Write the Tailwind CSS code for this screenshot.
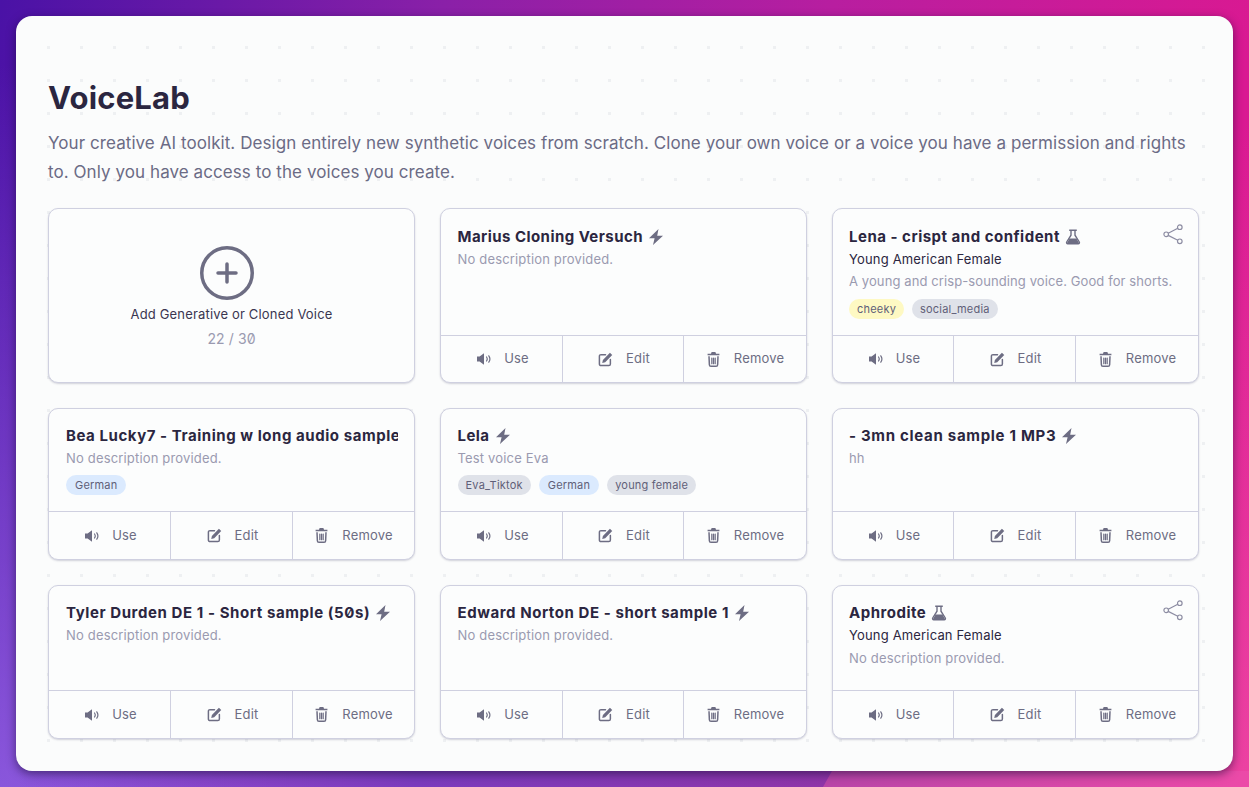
<!DOCTYPE html>
<html lang="en">

<head>
    <meta charset="UTF-8">
    <meta name="viewport" content="width=device-width, initial-scale=1.0">
    <title>VoiceLab</title>
    <script src="https://cdn.jsdelivr.net/npm/@tailwindcss/browser@4"></script>
</head>

<body class="font-['Inter',sans-serif] slashed-zero">
    <svg class="hidden">
        <symbol id="speaker" viewBox="1 1 14 14">
            <path fill="currentColor" d="M1 5.500h2.600L8 2.200v11.600L3.600 10.500H1z" />
            <path fill="none" stroke="currentColor" stroke-width="1.200" stroke-linecap="round" d="M10.500 6c.9 1.200.9 2.800 0 4M12.800 4.800c1.400 2 1.400 4.400 0 6.400" />
        </symbol>
        <symbol id="edit" viewBox="0 0 16 16">
            <path fill="none" stroke="currentColor" stroke-width="1.600" stroke-linecap="round" stroke-linejoin="round" d="M8 2.800H3.200A1.700 1.700 0 0 0 1.500 4.500v8.300a1.700 1.700 0 0 0 1.700 1.700h8.300a1.700 1.700 0 0 0 1.700-1.700V8" />
            <path fill="currentColor" d="M12.700.8l2.500 2.500-7.500 7.600-3.200.7.700-3.200z" />
        </symbol>
        <symbol id="trash" viewBox="0 0 16 16">
            <path fill="currentColor" d="M6 0h4l.7 1.800h3.600v1.600H1.700V1.800h3.600z" />
            <path fill="none" stroke="currentColor" stroke-width="1.600" stroke-linejoin="round" d="M3.200 4.500l.4 9a1.700 1.700 0 0 0 1.700 1.700h5.400a1.700 1.700 0 0 0 1.700-1.700l.4-9" />
            <path fill="none" stroke="currentColor" stroke-width="1.300" stroke-linecap="round" d="M6.200 6.500v6M8 6.500v6M9.800 6.500v6" />
        </symbol>
        <symbol id="bolt" viewBox="0 0 16 16">
            <path fill="currentColor" d="M10.500 0 1 9.300h5.600L5 16 15 6.700H9.200z" />
        </symbol>
        <symbol id="flask" viewBox="0 0 16 16">
            <path fill="none" stroke="currentColor" stroke-width="1.400" d="M4.200 1.200h7.600M6 1.200v5L1.700 13a1.200 1.200 0 0 0 1 1.800h10.600a1.200 1.200 0 0 0 1-1.800L10 6.200v-5" />
            <path fill="currentColor" d="M4.500 9.500h7l2.600 4.800H1.900z" />
        </symbol>
        <symbol id="share" viewBox="0 0 20 20">
            <g fill="none" stroke="currentColor" stroke-width="1.200">
                <circle cx="16.800" cy="3.200" r="2.300" />
                <circle cx="3.200" cy="10.300" r="2.300" />
                <circle cx="16.800" cy="17.300" r="2.300" />
                <path d="M14.800 4.300 5.200 9.200M5.200 11.400l9.600 4.800" />
            </g>
        </symbol>
    </svg>

    <div class="w-[1249px] h-[787px] overflow-hidden relative bg-[linear-gradient(97deg,#4a12a6_0%,#8a20a8_33%,#b81ea0_62%,#e0188f_100%)]">
        <div class="absolute inset-0 bg-[radial-gradient(ellipse_at_0%_100%,rgba(170,130,255,0.6),transparent_65%),radial-gradient(ellipse_at_100%_100%,rgba(255,130,190,0.4),transparent_60%)]"></div>
        <div class="absolute left-0 bottom-0 w-[832px] h-4 bg-[linear-gradient(90deg,transparent_2%,#7a3bbd_50%,#8f35a8)]"></div>
        <div class="absolute right-0 bottom-0 w-[426px] h-4 [clip-path:polygon(9px_0,100%_0,100%_100%,0_100%)] bg-[linear-gradient(90deg,#b845a8,#d848a8_60%,#ec4aa8)]"></div>

        <main class="absolute left-4 top-4 w-[1217px] h-[755px] rounded-2xl bg-[#fbfcfc] shadow-[0_3px_10px_rgba(20,10,50,0.55)] overflow-hidden">
            <div class="absolute left-[16px] top-[15px] w-[1204px] h-[726px] bg-[radial-gradient(circle,#eef0f2_1.800px,transparent_2px)] bg-[length:33px_33px]"></div>

            <div class="relative pl-8 pr-[34px] pt-[62px]">
                <h1 class="text-[31px] leading-10 font-bold text-[#2b2640] tracking-[0.2px]">VoiceLab</h1>
                <p class="mt-[11px] text-[17px] leading-[29px] tracking-[0.07px] text-[#6b6b85]">Your creative AI toolkit. Design entirely new synthetic voices from scratch. Clone your own voice or a voice you have a permission and rights to. Only you have access to the voices you create.</p>

                <div class="mt-[21px] grid grid-cols-[367px_367px_367px] grid-rows-[175px_152px_154px] gap-[25px] tracking-[0.17px]">
                    <button class="rounded-[10px] border border-[#cfd0e0] bg-[#fcfdfd] shadow-[0_1px_2px_rgba(40,40,80,0.2)] flex flex-col items-center pt-[37px]">
                        <svg class="w-[54px] h-[54px] mr-[10px] text-[#6d6d83]" viewBox="0 0 54 54" fill="none" stroke="currentColor">
                            <circle cx="27" cy="27" r="25.250" stroke-width="3.500" />
                            <path d="M18 27h18M27 18v18" stroke-width="3.500" stroke-linecap="round" />
                        </svg>
                        <span class="mt-[4px] text-[13px] leading-5 text-[#3a3650]">Add Generative or Cloned Voice</span>
                        <span class="mt-[5px] text-[14px] leading-5 tracking-[0.1px] text-[#9a9ab0]">22 / 30</span>
                    </button>

                    <div class="rounded-[10px] border border-[#cfd0e0] bg-[#fcfdfd] shadow-[0_1px_2px_rgba(40,40,80,0.2)] flex flex-col overflow-hidden">
                        <div class="flex-1 px-[16.500px] pt-[18px] min-h-0">
                            <h2 class="flex items-center gap-[5px] text-[15px] leading-5 font-bold tracking-[0.45px] text-[#2b2640] whitespace-nowrap">Marius Cloning Versuch <svg class="w-4 h-4 text-[#6d6d83]"><use href="#bolt" /></svg></h2>
                            <p class="mt-[2px] text-[13px] leading-5 text-[#9a9ab0]">No description provided.</p>
                        </div>
                        <div class="h-[47px] shrink-0 border-t border-[#cfd0e0] grid grid-cols-[122px_121px_1fr] text-[13px] text-[#6d6d83]">
                            <div class="pl-[3px] flex items-center justify-center gap-[13px] border-r border-[#cfd0e0]"><svg class="w-[14px] h-[14px]"><use href="#speaker" /></svg>Use</div>
                            <div class="pl-[2px] flex items-center justify-center gap-[13px] border-r border-[#cfd0e0]"><svg class="w-[15px] h-[15px]"><use href="#edit" /></svg>Edit</div>
                            <div class="flex items-center justify-center gap-[13px]"><svg class="w-[15px] h-[15px]"><use href="#trash" /></svg>Remove</div>
                        </div>
                    </div>

                    <div class="relative rounded-[10px] border border-[#cfd0e0] bg-[#fcfdfd] shadow-[0_1px_2px_rgba(40,40,80,0.2)] flex flex-col overflow-hidden">
                        <svg class="absolute right-[15px] top-[14px] w-[20px] h-[22px] text-[#8d8da3]"><use href="#share" /></svg>
                        <div class="flex-1 px-4 pt-[18px] min-h-0">
                            <h2 class="flex items-center gap-[5px] text-[15px] leading-5 font-bold tracking-[0.5px] text-[#2b2640] whitespace-nowrap">Lena - crispt and confident <svg class="w-4 h-4 text-[#6d6d83]"><use href="#flask" /></svg></h2>
                            <p class="mt-[2px] text-[13px] leading-5 text-[#2b2640]">Young American Female</p>
                            <p class="mt-[2px] text-[13px] leading-5 tracking-[0.1px] text-[#9a9ab0]">A young and crisp-sounding voice. Good for shorts.</p>
                            <div class="mt-[8px] flex gap-2 text-[11px] leading-5 tracking-[0.2px] text-[#5f5f78]">
                                <span class="rounded-full px-2 bg-[#fef9c3]">cheeky</span>
                                <span class="rounded-full px-2 bg-[#dfe2e9]">social_media</span>
                            </div>
                        </div>
                        <div class="h-[47px] shrink-0 border-t border-[#cfd0e0] grid grid-cols-[121px_122px_1fr] text-[13px] text-[#6d6d83]">
                            <div class="pl-[3px] flex items-center justify-center gap-[13px] border-r border-[#cfd0e0]"><svg class="w-[14px] h-[14px]"><use href="#speaker" /></svg>Use</div>
                            <div class="pl-[2px] flex items-center justify-center gap-[13px] border-r border-[#cfd0e0]"><svg class="w-[15px] h-[15px]"><use href="#edit" /></svg>Edit</div>
                            <div class="flex items-center justify-center gap-[13px]"><svg class="w-[15px] h-[15px]"><use href="#trash" /></svg>Remove</div>
                        </div>
                    </div>

                    <div class="rounded-[10px] border border-[#cfd0e0] bg-[#fcfdfd] shadow-[0_1px_2px_rgba(40,40,80,0.2)] flex flex-col overflow-hidden">
                        <div class="flex-1 px-[16.500px] pl-[17px] pt-[17px] min-h-0 overflow-hidden">
                            <h2 class="text-[15px] leading-5 font-bold tracking-[0.55px] text-[#2b2640] whitespace-nowrap overflow-hidden">Bea Lucky7 - Training w long audio sample</h2>
                            <p class="mt-[2px] text-[13px] leading-5 text-[#9a9ab0]">No description provided.</p>
                            <div class="mt-[7px] flex gap-2 text-[11px] leading-5 tracking-[0.2px] text-[#5f5f78]">
                                <span class="rounded-full px-[9px] bg-[#dbeafe]">German</span>
                            </div>
                        </div>
                        <div class="h-[48px] shrink-0 border-t border-[#cfd0e0] grid grid-cols-[122px_122px_1fr] text-[13px] text-[#6d6d83]">
                            <div class="pl-[3px] flex items-center justify-center gap-[13px] border-r border-[#cfd0e0]"><svg class="w-[14px] h-[14px]"><use href="#speaker" /></svg>Use</div>
                            <div class="pl-[2px] flex items-center justify-center gap-[13px] border-r border-[#cfd0e0]"><svg class="w-[15px] h-[15px]"><use href="#edit" /></svg>Edit</div>
                            <div class="flex items-center justify-center gap-[13px]"><svg class="w-[15px] h-[15px]"><use href="#trash" /></svg>Remove</div>
                        </div>
                    </div>

                    <div class="rounded-[10px] border border-[#cfd0e0] bg-[#fcfdfd] shadow-[0_1px_2px_rgba(40,40,80,0.2)] flex flex-col overflow-hidden">
                        <div class="flex-1 px-[16.500px] pt-[17px] min-h-0">
                            <h2 class="flex items-center gap-[5px] text-[15px] leading-5 font-bold tracking-[0.45px] text-[#2b2640] whitespace-nowrap">Lela <svg class="w-4 h-4 text-[#6d6d83]"><use href="#bolt" /></svg></h2>
                            <p class="mt-[2px] text-[13px] leading-5 text-[#9a9ab0]">Test voice Eva</p>
                            <div class="mt-[7px] flex gap-2 text-[11px] leading-5 tracking-[0.2px] text-[#5f5f78]">
                                <span class="rounded-full px-2 bg-[#dfe2e9]">Eva_Tiktok</span>
                                <span class="rounded-full px-[9px] bg-[#dbeafe]">German</span>
                                <span class="rounded-full px-2 bg-[#dfe2e9]">young female</span>
                            </div>
                        </div>
                        <div class="h-[48px] shrink-0 border-t border-[#cfd0e0] grid grid-cols-[122px_121px_1fr] text-[13px] text-[#6d6d83]">
                            <div class="pl-[3px] flex items-center justify-center gap-[13px] border-r border-[#cfd0e0]"><svg class="w-[14px] h-[14px]"><use href="#speaker" /></svg>Use</div>
                            <div class="pl-[2px] flex items-center justify-center gap-[13px] border-r border-[#cfd0e0]"><svg class="w-[15px] h-[15px]"><use href="#edit" /></svg>Edit</div>
                            <div class="flex items-center justify-center gap-[13px]"><svg class="w-[15px] h-[15px]"><use href="#trash" /></svg>Remove</div>
                        </div>
                    </div>

                    <div class="rounded-[10px] border border-[#cfd0e0] bg-[#fcfdfd] shadow-[0_1px_2px_rgba(40,40,80,0.2)] flex flex-col overflow-hidden">
                        <div class="flex-1 px-4 pt-[17px] min-h-0">
                            <h2 class="flex items-center gap-[5px] text-[15px] leading-5 font-bold tracking-[0.7px] text-[#2b2640] whitespace-nowrap">- 3mn clean sample 1 MP3 <svg class="w-4 h-4 text-[#6d6d83]"><use href="#bolt" /></svg></h2>
                            <p class="mt-[2px] text-[13px] leading-5 text-[#9a9ab0]">hh</p>
                        </div>
                        <div class="h-[48px] shrink-0 border-t border-[#cfd0e0] grid grid-cols-[121px_122px_1fr] text-[13px] text-[#6d6d83]">
                            <div class="pl-[3px] flex items-center justify-center gap-[13px] border-r border-[#cfd0e0]"><svg class="w-[14px] h-[14px]"><use href="#speaker" /></svg>Use</div>
                            <div class="pl-[2px] flex items-center justify-center gap-[13px] border-r border-[#cfd0e0]"><svg class="w-[15px] h-[15px]"><use href="#edit" /></svg>Edit</div>
                            <div class="flex items-center justify-center gap-[13px]"><svg class="w-[15px] h-[15px]"><use href="#trash" /></svg>Remove</div>
                        </div>
                    </div>

                    <div class="rounded-[10px] border border-[#cfd0e0] bg-[#fcfdfd] shadow-[0_1px_2px_rgba(40,40,80,0.2)] flex flex-col overflow-hidden">
                        <div class="flex-1 px-[16.500px] pl-[17px] pt-[17px] min-h-0">
                            <h2 class="flex items-center gap-[5px] text-[15px] leading-5 font-bold tracking-[0.58px] text-[#2b2640] whitespace-nowrap">Tyler Durden DE 1 - Short sample (50s) <svg class="w-4 h-4 text-[#6d6d83]"><use href="#bolt" /></svg></h2>
                            <p class="mt-[2px] text-[13px] leading-5 text-[#9a9ab0]">No description provided.</p>
                        </div>
                        <div class="h-[48px] shrink-0 border-t border-[#cfd0e0] grid grid-cols-[122px_122px_1fr] text-[13px] text-[#6d6d83]">
                            <div class="pl-[3px] flex items-center justify-center gap-[13px] border-r border-[#cfd0e0]"><svg class="w-[14px] h-[14px]"><use href="#speaker" /></svg>Use</div>
                            <div class="pl-[2px] flex items-center justify-center gap-[13px] border-r border-[#cfd0e0]"><svg class="w-[15px] h-[15px]"><use href="#edit" /></svg>Edit</div>
                            <div class="flex items-center justify-center gap-[13px]"><svg class="w-[15px] h-[15px]"><use href="#trash" /></svg>Remove</div>
                        </div>
                    </div>

                    <div class="rounded-[10px] border border-[#cfd0e0] bg-[#fcfdfd] shadow-[0_1px_2px_rgba(40,40,80,0.2)] flex flex-col overflow-hidden">
                        <div class="flex-1 px-[16.500px] pt-[17px] min-h-0">
                            <h2 class="flex items-center gap-[5px] text-[15px] leading-5 font-bold tracking-[0.56px] text-[#2b2640] whitespace-nowrap">Edward Norton DE - short sample 1 <svg class="w-4 h-4 text-[#6d6d83]"><use href="#bolt" /></svg></h2>
                            <p class="mt-[2px] text-[13px] leading-5 text-[#9a9ab0]">No description provided.</p>
                        </div>
                        <div class="h-[48px] shrink-0 border-t border-[#cfd0e0] grid grid-cols-[122px_121px_1fr] text-[13px] text-[#6d6d83]">
                            <div class="pl-[3px] flex items-center justify-center gap-[13px] border-r border-[#cfd0e0]"><svg class="w-[14px] h-[14px]"><use href="#speaker" /></svg>Use</div>
                            <div class="pl-[2px] flex items-center justify-center gap-[13px] border-r border-[#cfd0e0]"><svg class="w-[15px] h-[15px]"><use href="#edit" /></svg>Edit</div>
                            <div class="flex items-center justify-center gap-[13px]"><svg class="w-[15px] h-[15px]"><use href="#trash" /></svg>Remove</div>
                        </div>
                    </div>

                    <div class="relative rounded-[10px] border border-[#cfd0e0] bg-[#fcfdfd] shadow-[0_1px_2px_rgba(40,40,80,0.2)] flex flex-col overflow-hidden">
                        <svg class="absolute right-[15px] top-[13px] w-[20px] h-[22px] text-[#8d8da3]"><use href="#share" /></svg>
                        <div class="flex-1 px-4 pt-[17px] min-h-0">
                            <h2 class="flex items-center gap-[5px] text-[15px] leading-5 font-bold tracking-[0.5px] text-[#2b2640] whitespace-nowrap">Aphrodite <svg class="w-4 h-4 text-[#6d6d83]"><use href="#flask" /></svg></h2>
                            <p class="mt-[2px] text-[13px] leading-5 text-[#2b2640]">Young American Female</p>
                            <p class="mt-[3px] text-[13px] leading-5 text-[#9a9ab0]">No description provided.</p>
                        </div>
                        <div class="h-[48px] shrink-0 border-t border-[#cfd0e0] grid grid-cols-[121px_122px_1fr] text-[13px] text-[#6d6d83]">
                            <div class="pl-[3px] flex items-center justify-center gap-[13px] border-r border-[#cfd0e0]"><svg class="w-[14px] h-[14px]"><use href="#speaker" /></svg>Use</div>
                            <div class="pl-[2px] flex items-center justify-center gap-[13px] border-r border-[#cfd0e0]"><svg class="w-[15px] h-[15px]"><use href="#edit" /></svg>Edit</div>
                            <div class="flex items-center justify-center gap-[13px]"><svg class="w-[15px] h-[15px]"><use href="#trash" /></svg>Remove</div>
                        </div>
                    </div>
                </div>
            </div>
        </main>
    </div>
</body>

</html>
